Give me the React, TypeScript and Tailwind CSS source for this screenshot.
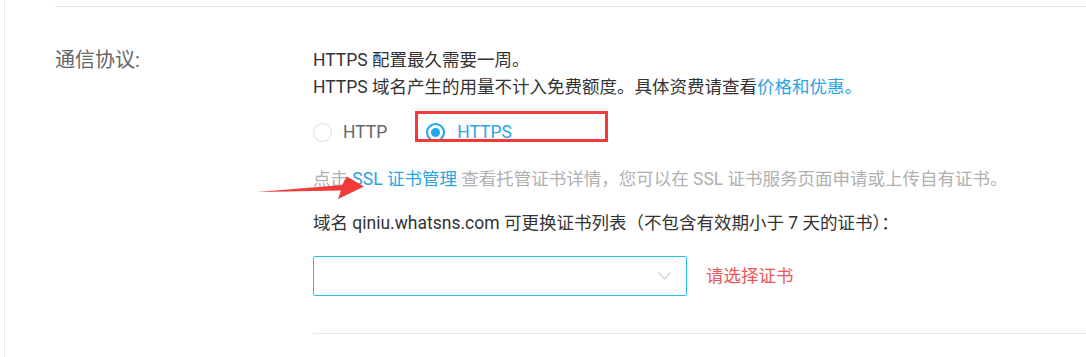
import React from "react";

const font = { fontFamily: "Roboto, 'Noto Sans CJK SC', sans-serif" };

export default function App() {
  return (
    <div className="relative w-[1086px] h-[357px] bg-white overflow-hidden" style={font}>
      <div className="ml-[4px] h-full border-l border-[#ebebeb]">
        <div className="ml-[50px] pt-[6px]">
          <div className="border-t border-[#e6e6ee]" />
          <div className="flex mt-[40px]">
            <div className="w-[258px] shrink-0 text-[20px] leading-[27px] text-[#666]">通信协议:</div>
            <div className="flex-1 text-[17.5px] leading-[27px] text-[#333]">
              <div>HTTPS 配置最久需要一周。</div>
              <div>
                HTTPS 域名产生的用量不计入免费额度。具体资费请查看
                <span className="text-[#2aa4e6]">价格和优惠。</span>
              </div>
              <div className="flex items-center mt-[18px] h-[27px]">
                <span className="w-[19px] h-[19px] rounded-full border border-[#dedede] bg-white" />
                <span className="ml-[11px] text-[#666]">HTTP</span>
                <span className="ml-[39px] w-[19px] h-[19px] rounded-full border-2 border-[#1ba7ec] flex items-center justify-center">
                  <span className="w-[9px] h-[9px] rounded-full bg-[#1ba7ec]" />
                </span>
                <span className="ml-[12px] text-[#2aa4e6]">HTTPS</span>
              </div>
              <div className="mt-[20px] text-[#b0b0b0]">
                点击 <span className="text-[#2aa4e6]">SSL 证书管理</span> 查看托管证书详情，您可以在 SSL 证书服务页面申请或上传自有证书。
              </div>
              <div className="mt-[17px]">域名 qiniu.whatsns.com 可更换证书列表（不包含有效期小于 7 天的证书）：</div>
              <div className="flex items-center mt-[19px]">
                <div className="w-[374px] h-[40px] rounded-[2px] border border-[#2bbdf2] flex items-center justify-end pr-[15px]">
                  <svg width="13" height="8" viewBox="0 0 13 8" fill="none">
                    <path d="M0.5 0.5 L6.5 6.8 L12.5 0.5" stroke="#cfcfcf" strokeWidth="1.2" />
                  </svg>
                </div>
                <span className="ml-[19px] text-[#ee5656]">请选择证书</span>
              </div>
              <div className="mt-[37px] border-t border-[#e6e6ee]" />
            </div>
          </div>
        </div>
      </div>
      <div className="absolute left-[415px] top-[111px] w-[193px] h-[31px] border-[3px] border-[#f33a3a]" />
      <svg className="absolute left-0 top-0" width="1086" height="357" viewBox="0 0 1086 357">
        <polygon points="257,192 342,185 347,176.5 364,186.5 338,199 341,190.5" fill="#f33a3a" />
      </svg>
    </div>
  );
}
